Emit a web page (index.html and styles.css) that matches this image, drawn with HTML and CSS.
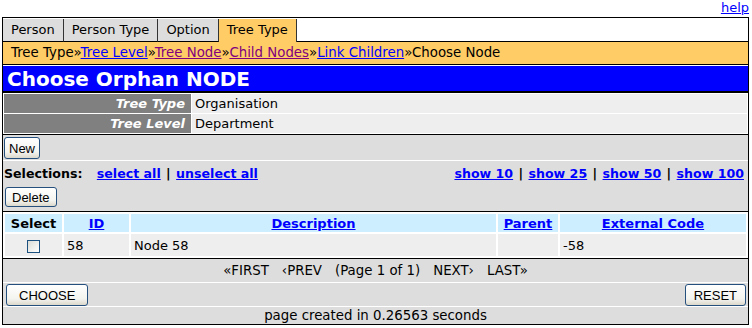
FILE: index.html
```html
<!DOCTYPE html>
<html>
<head>
    <title>Choose Orphan NODE</title>
    <link rel="stylesheet" href="styles.css">
</head>
<body>
    <div class="help"><a href="#">help</a></div>
    <div class="frame">
        <div class="tabs">
            <a class="tab" href="#">Person</a>
            <a class="tab" href="#">Person Type</a>
            <a class="tab" href="#">Option</a>
            <span class="tab active">Tree Type</span>
            <span class="tab-fill"></span>
        </div>
        <div class="crumbs">Tree Type&raquo;<a href="#">Tree Level</a>&raquo;<a class="seen" href="#">Tree Node</a>&raquo;<a class="seen" href="#">Child Nodes</a>&raquo;<a href="#">Link Children</a>&raquo;Choose Node</div>
        <h1 class="title">Choose Orphan NODE</h1>
        <table class="info">
            <tr>
                <th>Tree Type</th>
                <td>Organisation</td>
            </tr>
            <tr>
                <th>Tree Level</th>
                <td>Department</td>
            </tr>
        </table>
        <div class="panel">
            <div class="bar">
                <button class="btn btn-new">New</button>
            </div>
            <div class="bar bar-select">
                <div class="select-row">
                    <span class="select-links">
                        <b>Selections:</b>
                        <a href="#">select all</a> | <a href="#">unselect all</a>
                    </span>
                    <span class="show-links">
                        <a href="#">show 10</a> | <a href="#">show 25</a> | <a href="#">show 50</a> | <a href="#">show 100</a>
                    </span>
                </div>
                <button class="btn btn-delete">Delete</button>
            </div>
            <table class="list">
                <colgroup>
                    <col class="c-select">
                    <col class="c-id">
                    <col>
                    <col class="c-parent">
                    <col class="c-code">
                </colgroup>
                <thead>
                    <tr>
                        <th>Select</th>
                        <th><a href="#">ID</a></th>
                        <th><a href="#">Description</a></th>
                        <th><a href="#">Parent</a></th>
                        <th><a href="#">External Code</a></th>
                    </tr>
                </thead>
                <tbody>
                    <tr>
                        <td class="check-cell"><span class="check"></span></td>
                        <td>58</td>
                        <td>Node 58</td>
                        <td></td>
                        <td>-58</td>
                    </tr>
                </tbody>
            </table>
            <div class="bar pager">
                <span>&laquo;FIRST</span>
                <span>&lsaquo;PREV</span>
                <span>(Page 1 of 1)</span>
                <span>NEXT&rsaquo;</span>
                <span>LAST&raquo;</span>
            </div>
            <div class="bar actions">
                <button class="btn btn-choose">CHOOSE</button>
                <button class="btn btn-reset">RESET</button>
            </div>
            <div class="footer">page created in 0.26563 seconds</div>
        </div>
    </div>
</body>
</html>
```

FILE: styles.css
```css
body {
    margin: 0 3px 0 2px;
    font-family: "DejaVu Sans", Verdana, sans-serif;
    font-size: 13.33px;
    color: #000;
    background-color: #fff;
}

a {
    color: #0000ff;
}

.help {
    height: 17px;
    line-height: 15px;
    font-size: 13px;
    text-align: right;
}

.frame {
    border: 1px solid #000;
}

.tabs {
    display: flex;
    padding-top: 1px;
    font-size: 13px;
}

.tab {
    height: 22px;
    line-height: 22px;
    padding: 0 8px;
    background-color: #dddddd;
    border-right: 1px solid #333;
    border-bottom: 1px solid #000;
    color: #000;
    text-decoration: none;
}

.tab.active {
    height: 23px;
    background-color: #ffcc66;
    border-bottom: none;
}

.tab-fill {
    flex: 1;
    border-bottom: 1px solid #000;
}

.crumbs {
    height: 22px;
    line-height: 22px;
    padding: 0 8px;
    background-color: #ffcc66;
    border-bottom: 1px solid #000;
}

.crumbs a.seen {
    color: #800080;
}

.title {
    margin: 1px 0 0;
    height: 25px;
    line-height: 26px;
    padding: 0 4px;
    font-size: 20px;
    color: #fff;
    background-color: #0000ff;
    border-bottom: 2px solid #000;
}

.info {
    width: 100%;
    border-spacing: 1px;
    background-color: #fff;
}

.info th,
.info td {
    height: 19px;
    padding: 0;
    font-size: 13px;
    font-weight: normal;
}

.info th {
    width: 181px;
    padding-right: 6px;
    text-align: right;
    font-weight: bold;
    font-style: italic;
    color: #fff;
    background-color: #808080;
}

.info td {
    padding-left: 3px;
    background-color: #eeeeee;
}

.panel {
    background-color: #dddddd;
    border-top: 1px solid #000;
}

.bar {
    padding: 2px 1px 1px;
    border-bottom: 1px solid #fff;
}

.btn {
    height: 22px;
    padding: 0 7px;
    font-family: "Liberation Sans", Arial, sans-serif;
    font-size: 13px;
    color: #000;
    background: linear-gradient(#ffffff, #f3f3ef 70%, #dcd8cc);
    border: 1px solid #25507e;
    border-radius: 3px;
}

.btn-new {
    padding: 0 4px;
}

.btn-choose {
    padding: 0 12px;
}

.btn-reset {
    padding: 0 8px;
}

.bar-select {
    padding: 0 1px 4px;
    border-bottom: none;
}

.select-row {
    display: flex;
    justify-content: space-between;
    height: 26px;
    line-height: 26px;
    font-weight: bold;
    font-size: 12.6px;
}

.select-row a {
    margin: 0 1px;
}

.select-links b {
    margin-right: 9px;
}

.show-links {
    padding-right: 2px;
}

.btn-delete {
    height: 20px;
    margin-left: 1px;
    padding: 0 6px;
}

.list {
    width: 100%;
    table-layout: fixed;
    border-spacing: 2px;
    background-color: #fff;
    border-top: 1px solid #000;
    border-bottom: 1px solid #000;
}

.c-select {
    width: 57px;
}

.c-id {
    width: 65px;
}

.c-parent {
    width: 60px;
}

.c-code {
    width: 186px;
}

.list th {
    height: 18px;
    padding: 0;
    font-size: 13px;
    background-color: #cceeff;
}

.list td {
    height: 22px;
    padding: 0 3px;
    font-size: 13px;
    background-color: #eeeeee;
}

.list td.check-cell {
    text-align: center;
}

.check {
    display: inline-block;
    width: 11px;
    height: 11px;
    margin-top: 3px;
    vertical-align: middle;
    border: 1px solid #1c5180;
    background: linear-gradient(135deg, #dcdcd6, #ffffff);
}

.pager {
    display: flex;
    justify-content: center;
    gap: 13px;
    height: 20px;
    line-height: 20px;
}

.actions {
    display: flex;
    justify-content: space-between;
    padding: 1px 2px 0 3px;
}

.footer {
    height: 17px;
    line-height: 17px;
    text-align: center;
}
```
